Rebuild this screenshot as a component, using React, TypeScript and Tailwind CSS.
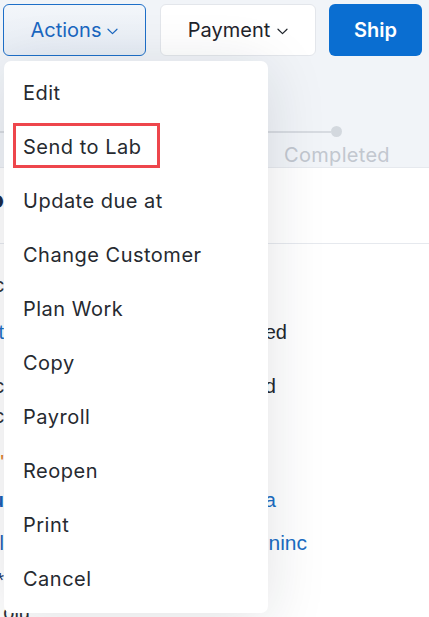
import React from 'react';

const menuItems = ['Edit', 'Send to Lab', 'Update due at', 'Change Customer', 'Plan Work', 'Copy', 'Payroll', 'Reopen', 'Print', 'Cancel'];

// background rows peeking out from behind the dropdown
const rows = [
  { mt: 'mt-[26px]', left: 'Customer Doc', leftCls: 'text-[#2b2f36]', right: '', rightCls: '' },
  { mt: 'mt-[17px]', left: 'Pickup at', leftCls: 'text-[#1a6dc4]', right: 'Not Started', rightCls: 'text-[#23272d]', rightW: 'w-[283px]' },
  { mt: 'mt-[24px]', left: 'Payment c', leftCls: 'text-[#2b2f36]', right: 'Unpaid', rightCls: 'text-[#23272d]', rightW: 'w-[272px]' },
  { mt: 'mt-[0px]', left: 'Type c', leftCls: 'text-[#2b2f36]', right: '', rightCls: '' },
  { mt: 'mt-[16px]', left: "Don'", leftCls: 'text-[#e07b1a]', right: '', rightCls: '' },
  { mt: 'mt-[8px]', left: 'Emu', leftCls: 'text-[#1a5fb4] font-bold', right: 'Sara', rightCls: 'text-[#1a6dc4]', rightW: 'w-[272px]' },
  { mt: 'mt-[13px]', left: 'Mail', leftCls: 'text-[#1a5fb4]', right: 'Admininc', rightCls: 'text-[#1a6dc4] text-[21px]', rightW: 'w-[303px]' },
  { mt: 'mt-[7px]', left: '**', leftCls: 'text-[#1e3a6e]', right: '', rightCls: '' },
];

function Chevron() {
  return (
    <svg width="11" height="7" viewBox="0 0 11 7" fill="none" className="mt-[3px]">
      <path d="M1 1.2L5.5 5.6L10 1.2" stroke="currentColor" strokeWidth="1.2" strokeLinecap="round" strokeLinejoin="round" />
    </svg>
  );
}

export default function App() {
  return (
    <div className="relative w-[429px] h-[617px] overflow-hidden bg-white" style={{ fontFamily: 'Inter, "Noto Sans", sans-serif' }}>
      {/* header area */}
      <div className="bg-[#f1f4f8] h-[168px] border-b border-[#e6e9ee] flex flex-col">
        <div className="flex items-center pt-[4px] pl-[3px]">
          <button className="w-[143px] h-[52px] rounded-[6px] border border-[#1e6fc8] bg-gradient-to-b from-[#f3f6fa] to-[#e7edf5] flex items-center justify-center gap-[6px] text-[20px] text-[#1a67c1]">
            Actions <Chevron />
          </button>
          <button className="ml-[14px] w-[156px] h-[52px] rounded-[6px] border border-[#e3e6eb] bg-white flex items-center justify-center gap-[7px] text-[20px] text-[#1f242b]">
            Payment <Chevron />
          </button>
          <button className="ml-[13px] w-[93px] h-[52px] rounded-[6px] bg-[#0a6ed1] text-white text-[20px] font-semibold flex items-center justify-center">
            Ship
          </button>
        </div>
        <div className="mt-[70px] flex">
          <div className="w-[402px] flex flex-col items-end">
            <div className="flex items-center w-full">
              <div className="flex-1 h-[2px] bg-[#d7dbe1]" />
              <div className="w-[11px] h-[11px] rounded-full bg-[#d3d8de] mr-[60px]" />
            </div>
            <div className="text-[20px] text-[#c2c7cf] mt-[3px] w-[130px] text-center tracking-[0.3px]">Completed</div>
          </div>
        </div>
      </div>

      {/* content */}
      <div className="h-[76px] border-b border-[#e6e9ee] flex items-start pt-[17px]">
        <div className="w-[4px] flex justify-end whitespace-nowrap">
          <span className="text-[24px] font-bold text-[#1b2a4a] leading-[30px]">Demo</span>
        </div>
      </div>
      <div className="flex flex-col text-[20px]" style={{ fontFamily: '"Liberation Sans", Arial, sans-serif' }}>
        {rows.map((r, i) => (
          <div key={i} className={`${r.mt} h-[30px] flex items-center`}>
            <div className="w-[4px] flex justify-end whitespace-nowrap">
              <span className={r.leftCls}>{r.left}</span>
            </div>
            {r.right && (
              <div className={`${r.rightW} flex justify-end whitespace-nowrap`}>
                <span className={r.rightCls}>{r.right}</span>
              </div>
            )}
          </div>
        ))}
        <div className="mt-[2px] h-[30px] flex items-center">
          <div className="w-[30px] flex justify-end whitespace-nowrap">
            <span className="text-[#2b2f36]">oiu</span>
          </div>
        </div>
      </div>

      {/* dropdown menu */}
      <div className="absolute left-[4px] top-[61px] w-[264px] bg-white rounded-[7px] pt-[5px] pb-[7px] shadow-[0_8px_60px_rgba(20,30,50,0.13)]">
        {menuItems.map((item) => (
          <div key={item} className="relative h-[54px] flex items-center px-[19px] text-[20px] text-[#262a30] tracking-[0.5px]">
            {item}
            {item === 'Send to Lab' && (
              <div className="absolute left-[9px] top-[3px] w-[147px] h-[45px] border-[3px] border-[#ee464c]" />
            )}
          </div>
        ))}
      </div>
    </div>
  );
}
